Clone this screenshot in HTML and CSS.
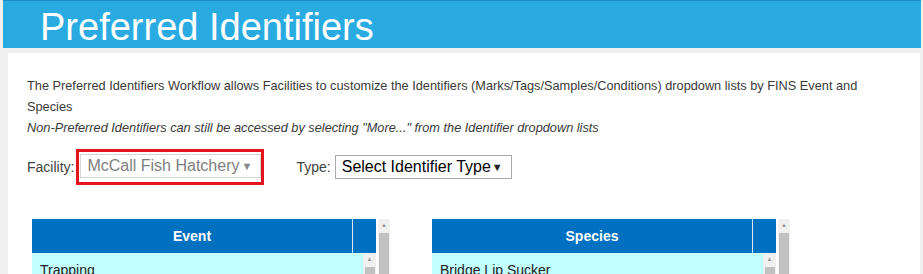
FILE: index.html
```html
<!DOCTYPE html>
<html lang="en">
<head>
  <meta charset="UTF-8">
  <title>Preferred Identifiers</title>
  <link rel="stylesheet" href="styles.css">
</head>
<body>
  <header class="banner">
    <h1>Preferred Identifiers</h1>
  </header>

  <main class="content">
    <p class="intro">The Preferred Identifiers Workflow allows Facilities to customize the Identifiers (Marks/Tags/Samples/Conditions) dropdown lists by FINS Event and Species</p>
    <p class="intro note">Non-Preferred Identifiers can still be accessed by selecting "More..." from the Identifier dropdown lists</p>

    <div class="filters">
      <label class="filter-label">Facility:</label>
      <div class="highlight">
        <div class="fake-select disabled">
          <span>McCall Fish Hatchery</span>
          <span class="arrow">&#9660;</span>
        </div>
      </div>
      <label class="filter-label type-label">Type:</label>
      <div class="fake-select">
        <span>Select Identifier Type</span>
        <span class="arrow">&#9660;</span>
      </div>
    </div>

    <div class="lists">
      <div class="list-box">
        <div class="list">
          <div class="list-head">
            <div class="head-title">Event</div>
            <div class="head-pad"></div>
          </div>
          <div class="list-body">
            <div class="rows">
              <div class="row">Trapping</div>
            </div>
            <div class="inner-scroll">
              <span class="scroll-arrow">&#9650;</span>
              <div class="thumb"></div>
            </div>
          </div>
        </div>
        <div class="outer-scroll">
          <span class="scroll-arrow">&#9650;</span>
          <div class="thumb"></div>
        </div>
      </div>

      <div class="list-box">
        <div class="list">
          <div class="list-head">
            <div class="head-title">Species</div>
            <div class="head-pad"></div>
          </div>
          <div class="list-body">
            <div class="rows">
              <div class="row">Bridge Lip Sucker</div>
            </div>
            <div class="inner-scroll">
              <span class="scroll-arrow">&#9650;</span>
              <div class="thumb"></div>
            </div>
          </div>
        </div>
        <div class="outer-scroll">
          <span class="scroll-arrow">&#9650;</span>
          <div class="thumb"></div>
        </div>
      </div>
    </div>
  </main>
</body>
</html>
```

FILE: styles.css
```css
* {
  margin: 0;
  padding: 0;
  box-sizing: border-box;
}

body {
  font-family: "Liberation Sans", Arial, sans-serif;
  background-color: #f0f0f0;
  color: #333;
  height: 274px;
  overflow: hidden;
}

.banner {
  margin: 0 2px 0 3px;
  height: 48px;
  padding: 6px 0 0 37px;
  background-color: #29abe2;
  border-top: 1px solid #1b8fc4;
}

.banner h1 {
  font-size: 38px;
  font-weight: normal;
  line-height: 40px;
  color: #fff;
}

.content {
  margin: 5px 3px 0 8px;
  padding: 22px 0 0 19px;
  background-color: #fff;
  height: 400px;
}

.intro {
  font-size: 12.75px;
  line-height: 21px;
  max-width: 850px;
  color: #3a3a3a;
}

.intro.note {
  font-style: italic;
}

.filters {
  display: flex;
  align-items: center;
  margin-top: 11px;
  height: 36px;
}

.filter-label {
  font-size: 14px;
  color: #444;
  margin-right: 2px;
}

.type-label {
  margin-left: 32px;
  margin-right: 4px;
}

.highlight {
  border: 3px solid #e3141d;
  padding: 2px 0 4px 1px;
  width: 188px;
}

.fake-select {
  display: flex;
  align-items: center;
  justify-content: space-between;
  height: 24px;
  padding: 0 8px 0 6px;
  border: 1px solid #a9a9a9;
  background-color: #fff;
  font-size: 16px;
  color: #000;
  width: 177px;
}

.fake-select.disabled {
  width: 181px;
  color: #808080;
  border-color: #d6d6d6;
}

.arrow {
  font-size: 11px;
  color: #222;
}

.disabled .arrow {
  color: #888;
}

.lists {
  display: flex;
  gap: 42px;
  margin-top: 34px;
  padding-left: 5px;
}

.list-box {
  display: flex;
  gap: 2px;
}

.list {
  width: 344px;
}

.list-head {
  display: flex;
  height: 34px;
  background-color: #0070c0;
}

.head-title {
  width: 321px;
  border-right: 1px solid #d8e6f2;
  color: #fff;
  font-size: 14px;
  font-weight: bold;
  text-align: center;
  line-height: 34px;
}

.head-pad {
  flex: 1;
}

.list-body {
  display: flex;
  height: 60px;
  background-color: #c2ffff;
}

.rows {
  flex: 1;
}

.row {
  font-size: 14px;
  color: #222;
  line-height: 20px;
  padding: 7px 8px;
}

.inner-scroll,
.outer-scroll {
  display: flex;
  flex-direction: column;
  align-items: center;
  background-color: #f0f0f0;
}

.inner-scroll {
  width: 13px;
}

.outer-scroll {
  width: 12px;
  height: 60px;
}

.scroll-arrow {
  font-size: 6px;
  color: #999;
  line-height: 13px;
  height: 14px;
}

.thumb {
  width: 10px;
  flex: 1;
  background-color: #c1c1c1;
}
```
